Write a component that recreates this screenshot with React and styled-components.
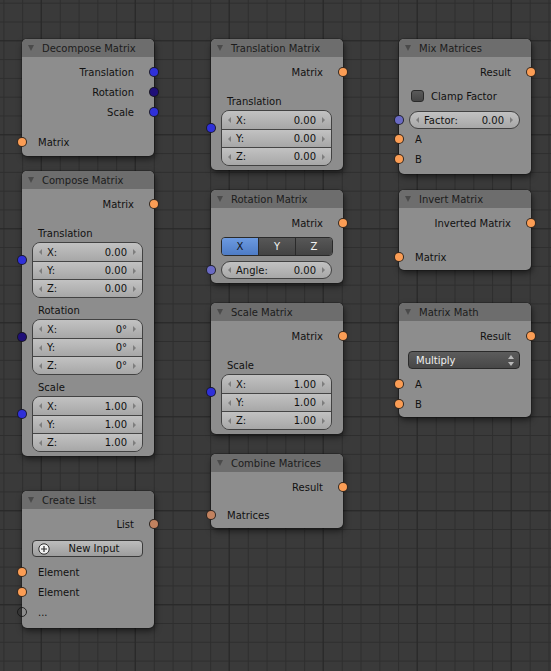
import React from 'react';
import styled, { createGlobalStyle } from 'styled-components';

const GlobalStyle = createGlobalStyle`
    html, body {
        margin: 0;
        padding: 0;
        background: #3a3a3a;
    }
    body {
        font-family: "DejaVu Sans", "Liberation Sans", sans-serif;
        font-size: 10px;
    }
`;

const SOCKET = {
    matrix: '#fb9d55',
    vector: '#2f30d9',
    euler: '#1f0f78',
    float: '#6a6ac4',
    list: '#c2825f',
    empty: 'transparent',
};

const Canvas = styled.div`
    position: relative;
    width: 551px;
    height: 671px;
    overflow: hidden;
    background-color: #3a3a3a;
    background-image:
        linear-gradient(to right, #282828 1px, transparent 1px),
        linear-gradient(to bottom, #282828 1px, transparent 1px),
        linear-gradient(to right, #2e2e2e 1px, transparent 1px),
        linear-gradient(to bottom, #2e2e2e 1px, transparent 1px);
    background-size: 94px 94px, 94px 94px, 18.8px 18.8px, 18.8px 18.8px;
    background-position: 40.6px 0, 0 40.3px, 3.4px 0, 0 2.7px;
`;

const NodeFrame = styled.div`
    position: absolute;
    left: ${({ $x }) => $x}px;
    top: ${({ $y }) => $y}px;
    width: 132px;
    padding-bottom: ${({ $pb }) => $pb}px;
    background: #8d8d8d;
    border-radius: 5px;
    box-shadow: 0 0 0 1px rgba(0, 0, 0, .18), 1px 3px 6px rgba(0, 0, 0, .55);
`;

const Header = styled.div`
    height: 18px;
    display: flex;
    align-items: center;
    gap: 8px;
    padding-left: 6px;
    background: #6d6d6d;
    border-radius: 5px 5px 0 0;
    color: #1c1c1c;
`;

const Collapse = styled.span`
    width: 0;
    height: 0;
    border-left: 3.5px solid transparent;
    border-right: 3.5px solid transparent;
    border-top: 6px solid rgba(0, 0, 0, .32);
`;

const Body = styled.div`
    display: flex;
    flex-direction: column;
    padding-top: 5px;
    color: #111;
`;

const SocketRow = styled.div`
    position: relative;
    height: 20px;
    box-sizing: border-box;
    display: flex;
    align-items: center;
    justify-content: ${({ $out }) => ($out ? 'flex-end' : 'flex-start')};
    padding: 1px 20px 0 16px;
`;

const Socket = styled.span`
    position: absolute;
    ${({ $side }) => $side}: -5px;
    top: ${({ $top }) => ($top == null ? 'calc(50% - 5px)' : `${$top}px`)};
    width: 10px;
    height: 10px;
    box-sizing: border-box;
    border-radius: 50%;
    border: 1px solid rgba(20, 20, 20, .85);
    background: ${({ $color }) => $color};
`;

const Spacer = styled.div`
    height: ${({ $h }) => $h}px;
    flex-shrink: 0;
`;

const GroupLabel = styled.div`
    height: 18px;
    display: flex;
    align-items: center;
    padding-left: 16px;
`;

const FieldWrap = styled.div`
    position: relative;
    padding: 0 11px 0 ${({ $pl }) => $pl ?? 10}px;
`;

const VectorBox = styled.div`
    border: 1px solid #424242;
    border-radius: 8px;
    overflow: hidden;
`;

const fieldFill = 'linear-gradient(to bottom, #c2c2c2, #a7a7a7)';

const FieldRow = styled.div`
    height: 18px;
    box-sizing: border-box;
    display: flex;
    align-items: center;
    padding: 0 6px;
    background: ${fieldFill};
    & + & {
        border-top: 1px solid #454545;
    }
`;

const Pill = styled.div`
    height: 18px;
    box-sizing: border-box;
    display: flex;
    align-items: center;
    padding: 0 6px;
    border: 1px solid #424242;
    border-radius: 9px;
    background: ${fieldFill};
`;

const Arrow = styled.span`
    width: 0;
    height: 0;
    border-top: 3px solid transparent;
    border-bottom: 3px solid transparent;
    ${({ $dir }) => ($dir === 'left'
        ? 'border-right: 3px solid rgba(0,0,0,.3); margin-right: 5px;'
        : 'border-left: 3px solid rgba(0,0,0,.3); margin-left: 6px;')}
`;

const FieldName = styled.span`
    flex: 1;
`;

const CheckRow = styled.div`
    height: 20px;
    display: flex;
    align-items: center;
    gap: 7px;
    padding-left: 12px;
`;

const Checkbox = styled.span`
    width: 13px;
    height: 12px;
    box-sizing: border-box;
    border: 1px solid #2a2a2a;
    border-radius: 3px;
    background: linear-gradient(to bottom, #5a5a5a, #454545);
`;

const Segmented = styled.div`
    height: 19px;
    margin: 0 10px;
    display: flex;
    box-sizing: border-box;
    border: 1px solid #2a2a2a;
    border-radius: 4px;
    overflow: hidden;
`;

const Segment = styled.div`
    flex: 1;
    display: flex;
    align-items: center;
    justify-content: center;
    color: ${({ $on }) => ($on ? '#111' : '#f2f2f2')};
    background: ${({ $on }) => ($on
        ? 'linear-gradient(to bottom, #6c9ae0, #4e7cc6)'
        : 'linear-gradient(to bottom, #575757, #434343)')};
    & + & {
        border-left: 1px solid #2a2a2a;
    }
`;

const Dropdown = styled.div`
    height: 18px;
    margin: 0 11px 0 9px;
    box-sizing: border-box;
    display: flex;
    align-items: center;
    justify-content: space-between;
    padding: 0 5px 0 7px;
    border: 1px solid #2a2a2a;
    border-radius: 4px;
    color: #f0f0f0;
    background: linear-gradient(to bottom, #5c5c5c, #474747);
`;

const Button = styled.div`
    height: 17px;
    margin: 0 11px 0 10px;
    box-sizing: border-box;
    display: flex;
    align-items: center;
    padding-left: 5px;
    border: 1px solid #3a3a3a;
    border-radius: 4px;
    background: linear-gradient(to bottom, #bdbdbd, #9d9d9d);
    color: #111;
`;

const ButtonText = styled.span`
    flex: 1;
    text-align: center;
    padding-right: 4px;
`;

const Node = ({ x, y, title, pb = 4, children }) => (
    <NodeFrame $x={x} $y={y} $pb={pb}>
        <Header>
            <Collapse />
            <span>{title}</span>
        </Header>
        <Body>{children}</Body>
    </NodeFrame>
);

const Output = ({ label, color = SOCKET.matrix }) => (
    <SocketRow $out>
        {label}
        <Socket $side="right" $color={color} />
    </SocketRow>
);

const Input = ({ label, color = SOCKET.matrix }) => (
    <SocketRow>
        {label}
        <Socket $side="left" $color={color} />
    </SocketRow>
);

const VectorInput = ({ label, values, color = SOCKET.vector }) => (
    <>
        <GroupLabel>{label}</GroupLabel>
        <FieldWrap>
            <Socket $side="left" $top={13} $color={color} />
            <VectorBox>
                {['X', 'Y', 'Z'].map((axis, i) => (
                    <FieldRow key={axis}>
                        <Arrow $dir="left" />
                        <FieldName>{axis}:</FieldName>
                        <span>{values[i]}</span>
                        <Arrow $dir="right" />
                    </FieldRow>
                ))}
            </VectorBox>
        </FieldWrap>
    </>
);

const FloatInput = ({ label, value }) => (
    <FieldWrap>
        <Socket $side="left" $top={4} $color={SOCKET.float} />
        <Pill>
            <Arrow $dir="left" />
            <FieldName>{label}:</FieldName>
            <span>{value}</span>
            <Arrow $dir="right" />
        </Pill>
    </FieldWrap>
);

const UpDown = () => (
    <svg width="6" height="11" viewBox="0 0 6 11">
        <path d="M3 0 L6 4 L0 4 Z" fill="#b8b8b8" />
        <path d="M3 11 L6 7 L0 7 Z" fill="#b8b8b8" />
    </svg>
);

const PlusIcon = () => (
    <svg width="12" height="12" viewBox="0 0 12 12">
        <circle cx="6" cy="6" r="5.2" fill="#f2f2f2" stroke="#2e2e2e" strokeWidth="1" />
        <path d="M6 3 V9 M3 6 H9" stroke="#2e2e2e" strokeWidth="1.2" />
    </svg>
);

const zero = ['0.00', '0.00', '0.00'];
const one = ['1.00', '1.00', '1.00'];
const deg = ['0°', '0°', '0°'];

export default function App() {
    return (
        <>
            <GlobalStyle />
            <Canvas>
                <Node x={22} y={39} title="Decompose Matrix">
                    <Output label="Translation" color={SOCKET.vector} />
                    <Output label="Rotation" color={SOCKET.euler} />
                    <Output label="Scale" color={SOCKET.vector} />
                    <Spacer $h={10} />
                    <Input label="Matrix" />
                </Node>

                <Node x={22} y={171} title="Compose Matrix">
                    <Output label="Matrix" />
                    <Spacer $h={10} />
                    <VectorInput label="Translation" values={zero} />
                    <Spacer $h={3} />
                    <VectorInput label="Rotation" values={deg} color={SOCKET.euler} />
                    <Spacer $h={3} />
                    <VectorInput label="Scale" values={one} />
                </Node>

                <Node x={22} y={491} title="Create List" pb={6}>
                    <Output label="List" color={SOCKET.list} />
                    <Spacer $h={6} />
                    <Button>
                        <PlusIcon />
                        <ButtonText>New Input</ButtonText>
                    </Button>
                    <Spacer $h={5} />
                    <Input label="Element" />
                    <Input label="Element" />
                    <Input label="..." color={SOCKET.empty} />
                </Node>

                <Node x={211} y={39} title="Translation Matrix">
                    <Output label="Matrix" />
                    <Spacer $h={10} />
                    <VectorInput label="Translation" values={zero} />
                </Node>

                <Node x={211} y={190} title="Rotation Matrix">
                    <Output label="Matrix" />
                    <Spacer $h={4} />
                    <Segmented>
                        <Segment $on>X</Segment>
                        <Segment>Y</Segment>
                        <Segment>Z</Segment>
                    </Segmented>
                    <Spacer $h={5} />
                    <FloatInput label="Angle" value="0.00" />
                </Node>

                <Node x={211} y={303} title="Scale Matrix">
                    <Output label="Matrix" />
                    <Spacer $h={10} />
                    <VectorInput label="Scale" values={one} />
                </Node>

                <Node x={211} y={454} title="Combine Matrices" pb={3}>
                    <Output label="Result" />
                    <Spacer $h={8} />
                    <Input label="Matrices" color={SOCKET.list} />
                </Node>

                <Node x={399} y={39} title="Mix Matrices" pb={5}>
                    <Output label="Result" />
                    <Spacer $h={4} />
                    <CheckRow>
                        <Checkbox />
                        <span>Clamp Factor</span>
                    </CheckRow>
                    <Spacer $h={5} />
                    <FloatInput label="Factor" value="0.00" />
                    <Input label="A" />
                    <Input label="B" />
                </Node>

                <Node x={399} y={190} title="Invert Matrix" pb={3}>
                    <Output label="Inverted Matrix" />
                    <Spacer $h={14} />
                    <Input label="Matrix" />
                </Node>

                <Node x={399} y={303} title="Matrix Math" pb={3}>
                    <Output label="Result" />
                    <Spacer $h={5} />
                    <Dropdown>
                        <span>Multiply</span>
                        <UpDown />
                    </Dropdown>
                    <Spacer $h={5} />
                    <Input label="A" />
                    <Input label="B" />
                </Node>
            </Canvas>
        </>
    );
}
